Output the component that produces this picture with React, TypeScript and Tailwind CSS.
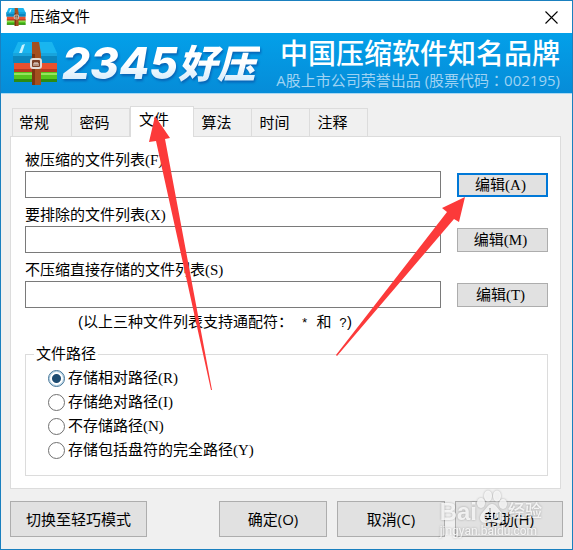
import type React from "react";
import { useState } from "react";

const TABS = ["常规", "密码", "文件", "算法", "时间", "注释"];

const FILE_LISTS = [
  { id: "compress", label: "被压缩的文件列表", hotkey: "F", editKey: "A" },
  { id: "exclude", label: "要排除的文件列表", hotkey: "X", editKey: "M" },
  { id: "store", label: "不压缩直接存储的文件列表", hotkey: "S", editKey: "T" }
];

const PATH_OPTIONS = [
  { label: "存储相对路径", hotkey: "R" },
  { label: "存储绝对路径", hotkey: "I" },
  { label: "不存储路径", hotkey: "N" },
  { label: "存储包括盘符的完全路径", hotkey: "Y" }
];

const App: React.FC = () => {
  const [activeTab, setActiveTab] = useState("文件");

  return (
    <div className="relative flex flex-col border border-[#1a80bf] bg-[#f0f0f0] font-['Liberation_Sans','Noto_Sans_CJK_SC',sans-serif] text-[15px] text-black">
      <TitleBar />
      <Banner />
      <div className="flex flex-col px-[9px] pt-3 pb-3">
        <div role="tablist" className="flex h-[30px] items-end pl-[2px]">
          {TABS.map((tab) => (
            <button
              key={tab}
              type="button"
              role="tab"
              aria-selected={tab === activeTab}
              onClick={() => setActiveTab(tab)}
              className={
                tab === activeTab
                  ? "relative -mb-[1px] h-[31px] w-16 border border-b-0 border-[#dcdcdc] bg-white pr-4 pb-1 leading-5"
                  : "h-7 w-[58px] border border-b-0 border-l-0 border-[#dcdcdc] pr-3 leading-5 first:w-[60px] first:border-l first:pr-4"
              }
            >
              {tab}
            </button>
          ))}
        </div>
        <FilePanel />
        <div className="mt-3 flex justify-between">
          <DialogButton className="w-[137px]">切换至轻巧模式</DialogButton>
          <div className="flex gap-[10px]">
            <DialogButton className="w-[108px]">确定(O)</DialogButton>
            <DialogButton className="w-[108px]">取消(C)</DialogButton>
            <DialogButton className="w-[108px]">帮助(H)</DialogButton>
          </div>
        </div>
      </div>
      <Arrows />
      <Watermark />
    </div>
  );
};

const TitleBar: React.FC = () => (
  <div className="flex h-8 items-center bg-white pr-[14px] pl-[5px]">
    <ArchiveIcon className="h-[18px] w-5" />
    <h1 className="ml-1 flex-1 leading-5">压缩文件</h1>
    <button type="button" aria-label="关闭">
      <svg className="h-[13px] w-[13px]" viewBox="0 0 13 13">
        <path d="M.5 .5l12 12M12.5 .5l-12 12" stroke="#000" strokeWidth="1.1" />
      </svg>
    </button>
  </div>
);

const Banner: React.FC = () => (
  <div className="flex h-[61px] items-center justify-between border-b border-[#a9d8f2] bg-linear-to-b from-[#03a0e9] to-[#068cd8] pr-3 pl-[11px]">
    <div className="flex items-center">
      <ArchiveIcon className="h-[43px] w-[46px]" />
      <div className="ml-1 flex items-center drop-shadow-[1px_2px_1px_#0763b5]">
        <span className="bg-linear-to-b from-white from-50% to-[#c3e3f9] bg-clip-text pr-1 font-[Inter] text-[44px] leading-[50px] font-extrabold text-transparent italic">
          2345
        </span>
        <span className="-ml-1 bg-linear-to-b from-white from-50% to-[#c3e3f9] bg-clip-text pr-1 pb-1 font-['Noto_Sans_CJK_SC'] text-[39px] leading-[50px] font-black text-transparent italic">
          好压
        </span>
      </div>
    </div>
    <div className="flex flex-col items-end gap-[2px] whitespace-nowrap">
      <p className="font-['Noto_Sans_CJK_SC',sans-serif] text-[28px] leading-8 font-medium text-white">
        中国压缩软件知名品牌
      </p>
      <p className="font-['Open_Sans','Noto_Sans_CJK_SC',sans-serif] text-[15px] leading-5 text-[#9fd3f3]">
        A股上市公司荣誉出品 (股票代码
        <span className="font-['Noto_Sans_CJK_TC']">：</span>
        002195)
      </p>
    </div>
  </div>
);

const FilePanel: React.FC = () => (
  <div className="mr-[2px] flex flex-col border border-[#dcdcdc] bg-white pt-3 pr-3 pb-3 pl-[14px]">
    <div className="flex flex-col gap-[6px]">
      {FILE_LISTS.map(({ id, label, hotkey, editKey }, index) => (
        <div key={id}>
          <label htmlFor={id} className="block leading-[22px]">
            {label}
            <Hotkey name={hotkey} />
          </label>
          <div className="flex items-center gap-4">
            <input
              id={id}
              type="text"
              className="h-[27px] min-w-0 flex-1 border border-[#7a7a7a] bg-white px-1 outline-none"
            />
            <button
              type="button"
              className={
                index === 0
                  ? "h-6 w-[91px] border-2 border-[#0078d7] bg-[#e1e1e1] pr-1 leading-5"
                  : "h-6 w-[91px] border border-[#adadad] bg-[#e1e1e1] pr-1 leading-5"
              }
            >
              编辑
              <Hotkey name={editKey} />
            </button>
          </div>
        </div>
      ))}
    </div>
    <p className="mt-[2px] pl-[53px] leading-6 whitespace-pre">
      (以上三种文件列表支持通配符：
      <span className="font-['Liberation_Mono',monospace] text-[13px]"> * </span>和
      <span className="font-['Liberation_Mono',monospace] text-[13px]"> ?</span>)
    </p>
    <fieldset className="mt-2 border border-[#dcdcdc] pb-[13px] pl-[22px]">
      <legend className="-ml-[14px] px-[2px] leading-5">文件路径</legend>
      <div className="flex flex-col pt-[2px]">
        {PATH_OPTIONS.map(({ label, hotkey }, index) => (
          <label key={hotkey} className="flex h-6 items-center gap-[3px]">
            <input
              type="radio"
              name="path"
              defaultChecked={index === 0}
              className="h-[17px] w-[17px] appearance-none rounded-full border border-[#707070] bg-white checked:border-[#3f7296] checked:bg-[radial-gradient(circle,#1d4c72_4px,#ffffff_5px)] checked:shadow-[inset_0_0_0_1px_#b5d3e6]"
            />
            <span className="leading-5">
              {label}
              <Hotkey name={hotkey} />
            </span>
          </label>
        ))}
      </div>
    </fieldset>
  </div>
);

const Hotkey: React.FC<{ name: string }> = ({ name }) => (
  <span className="font-['Liberation_Serif',serif]">({name})</span>
);

const DialogButton: React.FC<{
  className: string;
  children: React.ReactNode;
}> = ({ className, children }) => (
  <button
    type="button"
    className={`h-9 border border-[#adadad] bg-[#e1e1e1] font-['Open_Sans','Noto_Sans_CJK_SC',sans-serif] leading-5 ${className}`}
  >
    {children}
  </button>
);

const ArchiveIcon: React.FC<{ className: string }> = ({ className }) => (
  <svg className={className} viewBox="0 0 46 43" preserveAspectRatio="none">
    <path d="M6 0h34l5 11v9H1v-9z" fill="#19b5ef" />
    <path d="M1 11h44v10H1z" fill="#0b86bd" />
    <path d="M1 11h44v3H1z" fill="#18a4dc" />
    <path d="M2 21h43v9H2z" fill="#e9512e" />
    <path d="M2 27h43v3H2z" fill="#b93b21" />
    <path d="M2 30h43v10H2z" fill="#55c51f" />
    <path d="M2 31h43v2H2z" fill="#95e35c" />
    <path d="M2 37h43v3H2z" fill="#2d8b12" />
    <path d="M10 3l3-1-3 9H7z" fill="#c9f2ff" />
    <path d="M20 0h7l2 12v31h-9V12z" fill="#a4501f" />
    <path d="M20 12h3v31h-3z" fill="#7b3512" />
    <rect x="19" y="17" width="10" height="9" rx="2" fill="#7b4126" stroke="#e4ded8" strokeWidth="2" />
    <path d="M22 24v-3h4v3M24 21v3" stroke="#f0e8df" fill="none" />
  </svg>
);

const Arrows: React.FC = () => (
  <svg
    aria-hidden="true"
    className="pointer-events-none absolute top-0 left-0 h-[548px] w-[571px]"
    viewBox="1 1 571 548"
    fill="#fc3a3a"
  >
    <path d="M155 116L149 142L156 141L211 390L212 390L165 139L170 138Z" />
    <path d="M465 197L442 208L447 212L336 355L337 356L454 219L459 222Z" />
  </svg>
);

const Watermark: React.FC = () => (
  <div
    aria-hidden="true"
    className="pointer-events-none absolute right-[30px] bottom-[11px] flex flex-col text-white/80 drop-shadow-[0_0_1px_#00000055]"
  >
    <div className="flex items-end">
      <span className="text-[24px] leading-6 font-bold">Bai</span>
      <svg className="h-[34px] w-[31px]" viewBox="0 0 31 34" fill="currentColor">
        <ellipse cx="4" cy="13" rx="4" ry="5" />
        <ellipse cx="11" cy="6" rx="4" ry="5.5" />
        <ellipse cx="20" cy="6" rx="4" ry="5.5" />
        <ellipse cx="26" cy="14" rx="4" ry="5" />
        <path
          fillRule="evenodd"
          d="M15 14c4 0 6 5 9 8 6 6 2 12-4 11-4-1-6-1-10 0-6 1-10-5-4-11 3-3 5-8 9-8zM11 22c-5 1-5 8 0 8h3V18h-2v4zm0 2h1v4h-1c-2 0-2-4 0-4zM16 22v5c0 2 1 3 3 3h4v-8h-2v6h-2c-1 0-1-1-1-1v-5z"
        />
      </svg>
      <span className="text-[17px] leading-6 font-medium">经验</span>
    </div>
    <span className="font-[Roboto] text-[12px] leading-[14px]">jingyan.baidu.com</span>
  </div>
);

export default App;
